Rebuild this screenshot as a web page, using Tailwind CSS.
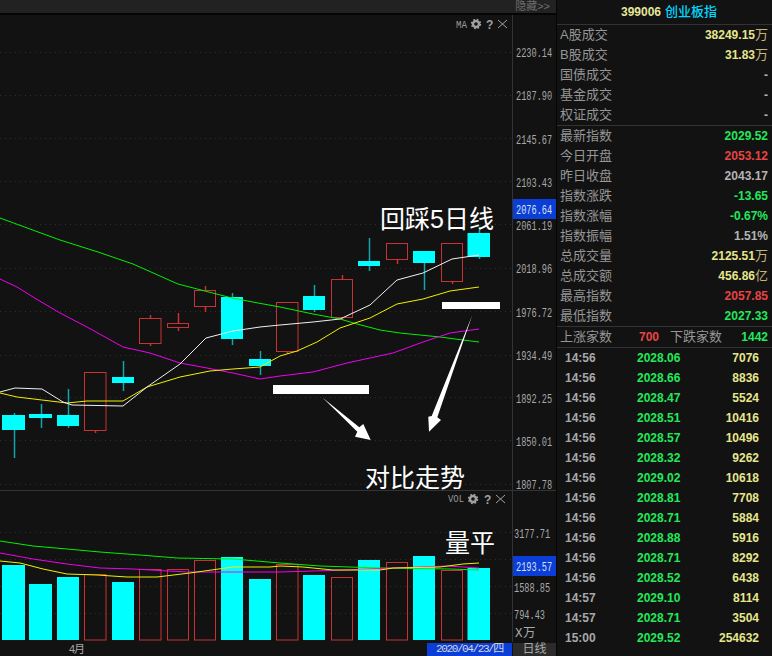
<!DOCTYPE html>
<html lang="zh-CN">
<head>
    <meta charset="UTF-8">
    <title>399006 创业板指</title>
    <script src="https://cdn.jsdelivr.net/npm/@tailwindcss/browser@4"></script>
</head>
<body class="bg-[#121212] overflow-hidden font-['Liberation_Sans','Noto_Sans_CJK_SC',sans-serif]">
    <div class="flex w-[772px] h-[656px]">
        <!-- Chart column -->
        <div class="flex flex-col w-[556px] shrink-0">
            <div class="h-[15px] shrink-0 flex justify-end items-center pr-[6px] bg-[#222222] border-b-2 border-[#050505] text-[11px] leading-none text-[#6e6e6e]">隐藏&gt;&gt;</div>
            <svg id="chart" class="block w-[556px] h-[628px] shrink-0" viewBox="0 15 556 628">
                <g id="grid"></g>
                <path d="M512.5 15V642M0 490.5H556" class="stroke-[#333333]" fill="none"/>
                <g id="candles"></g>
                <g id="vols"></g>
                <g fill="none" class="stroke-[1px]">
                    <polyline class="stroke-[#00f000]" points="0,218 60,240 98,252 133,264 178,284 205,291 232,298 258,303 280,307 313,314 340,319 357,324 380,330 400,333 420,335 440,337 463,340 479,342"/>
                    <polyline class="stroke-[#f000f0]" points="0,279 17,287 33,297 60,313 87,327 123,347 150,353 180,363 207,368 233,373 260,379 280,376 313,372 347,363 393,353 423,342 450,333 479,329"/>
                    <polyline class="stroke-[#f0f000]" points="0,393 17,397 42,400 67,403 87,401 123,401 147,387 180,377 210,371 233,369 260,367 280,356 297,351 317,342 340,328 370,318 397,304 423,299 450,291 479,287"/>
                    <polyline class="stroke-[#f0f0f0]" points="0,392 15,388 42,389 63,402 72,405 123,406 147,387 180,364 206,338 233,331 260,327 280,325 313,322 340,319 370,305 397,280 423,273 452,259 479,255"/>
                    <polyline class="stroke-[#00f000]" points="0,541 33,546 67,549 100,552 140,555 177,558 233,559 280,563 320,566 380,568 450,569 479,570"/>
                    <polyline class="stroke-[#f000f0]" points="0,553 33,559 67,564 100,568 133,569 187,572 253,572 280,572 347,570 393,568 447,566 479,568"/>
                    <polyline class="stroke-[#f0f000]" points="0,561 20,563 43,569 67,574 97,575 127,577 157,577 190,573 233,567 270,567 280,566 303,567 333,570 380,570 393,568 440,567 463,564 479,563"/>
                </g>

                <!-- Hand drawn notes on top of the chart -->
                <rect x="442" y="302" width="58" height="7" class="fill-white"/>
                <rect x="273" y="385" width="96" height="9" class="fill-white"/>
                <polygon class="fill-white" points="322.7,397.7 359.3,427.3 363.3,424 370.7,440 355,436.7 357.3,431.7"/>
                <polygon class="fill-white" points="472.3,315 437.3,417.3 441,420 429,431.7 428.3,416.7 431.7,416"/>
                <g class="fill-white text-[25px]">
                    <text x="380" y="228">回踩5日线</text>
                    <text x="365" y="487">对比走势</text>
                    <text x="445" y="552">量平</text>
                </g>

                <!-- Indicator tools -->
                <g class="fill-[#9a9a9a] text-[11px]" font-family="Liberation Mono">
                    <text transform="translate(456 28) scale(0.83 1)">MA</text>
                    <text transform="translate(448 502) scale(0.81 1)">VOL</text>
                </g>
                <g fill="none" class="stroke-[#a0a0a0]">
                    <circle cx="476" cy="24" r="3" stroke-width="2.4"/>
                    <circle cx="476" cy="24" r="4.3" stroke-width="1.8" stroke-dasharray="1.7 1.7"/>
                    <path d="M498 20l9 8M507 20l-9 8"/>
                    <circle cx="473" cy="499" r="3" stroke-width="2.4"/>
                    <circle cx="473" cy="499" r="4.3" stroke-width="1.8" stroke-dasharray="1.7 1.7"/>
                    <path d="M496 495l9 8M505 495l-9 8"/>
                </g>
                <g class="fill-[#a0a0a0] text-[12px]" font-weight="700">
                    <text x="486" y="28.5">?</text>
                    <text x="484" y="503.5">?</text>
                </g>

                <!-- Current value tags -->
                <rect x="513" y="199" width="43" height="20" class="fill-[#0a3ed6]"/>
                <rect x="513" y="556" width="43" height="20" class="fill-[#0a3ed6]"/>
                <g id="axis" font-family="Liberation Mono" class="text-[12.5px]"></g>
            </svg>
            <div class="h-[13px] shrink-0 flex text-[12px] leading-[13px] text-[#a8a8a8]">
                <div class="w-[427px] pl-[69px] text-[11px] tracking-[-1px]">4月</div>
                <div class="w-[85px] bg-[#0a3ed6] text-center text-[#d8d8d8] font-['Liberation_Mono','Noto_Sans_CJK_SC',monospace] text-[11px] tracking-[-1.4px]">2020/04/23/四</div>
                <div class="ml-px flex-1 bg-[#2b2b2b] text-center">日线</div>
            </div>
        </div>

        <!-- Quote panel -->
        <div class="flex-1 border-l border-[#050505] bg-[#121212]">
            <div class="h-[25px] border-b border-[#333333] flex items-center pl-[64px] gap-[4px] font-bold text-[12px]">
                <span class="text-[#e6e69a]">399006</span>
                <span class="text-[13px] font-medium text-[#00d8ff]">创业板指</span>
            </div>
            <div id="section1" class="border-b border-[#333333]"></div>
            <div id="section2" class="border-b border-[#333333]"></div>
            <div class="h-[21px] border-b border-[#333333] flex items-center pl-[3px] text-[13px] text-[#969696]">
                <span class="w-[79px]">上涨家数</span>
                <span class="w-[31px] font-bold text-[12px] text-[#e84444]">700</span>
                <span class="w-[64px]">下跌家数</span>
                <span class="w-[34px] text-right font-bold text-[12px] text-[#22e85a]">1442</span>
            </div>
            <div id="trades"></div>
        </div>
    </div>

    <script>
        const CYAN = 'fill-[#00ffff]', WICK = 'stroke-[#12a5ad]', RED = 'stroke-[#c83232]';

        // x, width, top, bottom, wick top, wick bottom
        const candles = [
            [2, 23, 415, 430, 413, 458, 0], [29, 23, 414, 418, 404, 428, 0], [57, 22, 415, 426, 389, 428, 0],
            [84.5, 21.5, 372.5, 430.5, 372, 433, 1], [112, 22, 377, 383, 361, 391, 0], [139.5, 21.5, 318.5, 343.5, 315, 346, 1],
            [167.5, 21, 323.5, 327.5, 313, 331, 1], [194.5, 21, 290.5, 306.5, 286, 312, 1], [221, 22, 297, 339, 293, 345, 0],
            [249, 22, 359, 366, 351, 375, 0], [276.5, 21.5, 302.5, 351.5, 302, 354, 1], [303, 22, 296, 310, 285, 312, 0],
            [331.5, 21, 279.5, 317.5, 275, 320, 1], [358, 22, 261, 266, 238, 271, 0], [386.5, 21, 243.5, 259.5, 243, 264, 1],
            [413, 22, 251, 263, 251, 290, 0], [441.5, 21, 243.5, 281.5, 243, 284, 1], [467.5, 22.5, 233, 257, 227, 259, 0],
        ];
        document.getElementById('candles').innerHTML = candles.map(([x, w, t, b, wt, wb, up]) => {
            const cx = Math.round(x + w / 2) + 0.5;
            return up
                ? `<path d="M${cx} ${wt}V${wb}" class="${RED}" stroke-width="1.5"/><rect x="${x}" y="${t}" width="${w}" height="${b - t}" class="${RED} fill-[#121212]"/>`
                : `<path d="M${cx} ${wt}V${wb}" class="${WICK}" stroke-width="1.5"/><rect x="${x}" y="${t}" width="${w}" height="${b - t}" class="${CYAN}"/>`;
        }).join('');

        // volume bars share the x of the candle above them
        const volTops = [565, 584, 577, 574.5, 582, 569.5, 569.5, 560.5, 557, 579, 564.5, 575, 577.5, 560, 562.5, 556, 570.5, 568];
        document.getElementById('vols').innerHTML = candles.map(([x, w, , , , , up], i) => up
            ? `<rect x="${x}" y="${volTops[i]}" width="${w}" height="${640 - volTops[i]}" fill="none" class="${RED}"/>`
            : `<rect x="${x}" y="${volTops[i]}" width="${w}" height="${640 - volTops[i]}" class="${CYAN}"/>`
        ).join('');

        const gridYs = [52, 95, 138, 181, 224, 268, 311, 355, 397, 440, 484, 532, 559, 586, 613];
        document.getElementById('grid').innerHTML = gridYs.map(y =>
            `<path d="M0 ${y + 0.5}H512" class="stroke-[#2e2e2e]" stroke-dasharray="1 4"/>`
        ).join('');

        // label, left, baseline, colour; glyphs squeezed to the tall narrow axis font
        const GREY = 'fill-[#a8a8a8]', BLUE = 'fill-[#d8e0f0]';
        const axis = [
            ['2230.14', 516, 57, GREY], ['2187.90', 516, 100, GREY], ['2145.67', 516, 144, GREY],
            ['2103.43', 516, 187, GREY], ['2076.64', 516, 214, BLUE], ['2061.19', 516, 230, GREY],
            ['2018.96', 516, 273, GREY], ['1976.72', 516, 317, GREY], ['1934.49', 516, 360, GREY],
            ['1892.25', 516, 403, GREY], ['1850.01', 516, 446, GREY], ['1807.78', 516, 489, GREY],
            ['3177.71', 514, 538, GREY], ['2193.57', 516, 571, BLUE], ['1588.85', 514, 592, GREY],
            ['794.43', 514, 619, GREY],
        ];
        document.getElementById('axis').innerHTML = axis.map(([t, x, y, c]) =>
            `<text transform="translate(${x} ${y}) scale(0.69 1)" class="${c}">${t}</text>`
        ).join('') + `<text x="515" y="637" class="${GREY}">X万</text>`;

        const YEL = 'text-[#e6e68c]', GRN = 'text-[#22e85a]', PINK = 'text-[#e84444]', GRY = 'text-[#b4b4b4]';
        const row = ([label, value, color, unit]) => `
            <div class="h-[20px] flex items-center justify-between pl-[3px] pr-[4px] text-[13px] text-[#969696]">
                <span>${label}</span>
                <span class="font-bold text-[12px] ${color}">${value}${unit ? `<span class="font-normal text-[13px] text-[#c4b678]">${unit}</span>` : ''}</span>
            </div>`;

        document.getElementById('section1').innerHTML = [
            ['A股成交', '38249.15', YEL, '万'], ['B股成交', '31.83', YEL, '万'],
            ['国债成交', '-', GRY], ['基金成交', '-', GRY], ['权证成交', '-', GRY],
        ].map(row).join('');

        document.getElementById('section2').innerHTML = [
            ['最新指数', '2029.52', GRN], ['今日开盘', '2053.12', PINK], ['昨日收盘', '2043.17', GRY],
            ['指数涨跌', '-13.65', GRN], ['指数涨幅', '-0.67%', GRN], ['指数振幅', '1.51%', GRY],
            ['总成交量', '2125.51', YEL, '万'], ['总成交额', '456.86', YEL, '亿'],
            ['最高指数', '2057.85', PINK], ['最低指数', '2027.33', GRN],
        ].map(row).join('');

        const trades = [
            ['14:56', '2028.06', 7076], ['14:56', '2028.66', 8836], ['14:56', '2028.47', 5524], ['14:56', '2028.51', 10416],
            ['14:56', '2028.57', 10496], ['14:56', '2028.32', 9262], ['14:56', '2029.02', 10618], ['14:56', '2028.81', 7708],
            ['14:56', '2028.71', 5884], ['14:56', '2028.88', 5916], ['14:56', '2028.71', 8292], ['14:56', '2028.52', 6438],
            ['14:57', '2029.10', 8114], ['14:57', '2028.71', 3504], ['15:00', '2029.52', 254632],
        ];
        document.getElementById('trades').innerHTML = trades.map(([time, price, vol]) => `
            <div class="h-[20px] flex items-center pl-[8px] font-bold text-[12px]">
                <span class="w-[72px] text-[#a8a8a8]">${time}</span>
                <span class="w-[79px] ${GRN}">${price}</span>
                <span class="w-[43px] text-right ${YEL}">${vol}</span>
            </div>`).join('');
    </script>
</body>
</html>
